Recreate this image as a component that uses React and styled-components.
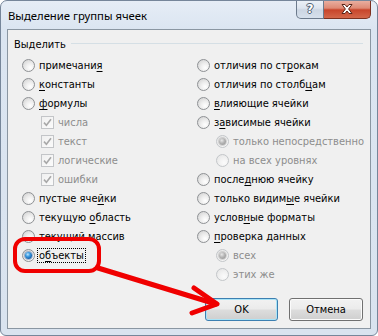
import React from 'react';
import styled, { createGlobalStyle, css } from 'styled-components';

const GlobalStyle = createGlobalStyle`
  html, body { margin: 0; padding: 0; background: #ffffff; }
  body { width: 378px; height: 336px; overflow: hidden; }
  #root { width: 378px; height: 336px; }
`;

const uiFont = `"DejaVu Sans Condensed", "DejaVu Sans", sans-serif`;

const Window = styled.div`
  position: relative;
  width: 378px;
  height: 336px;
  box-sizing: border-box;
  border: 1px solid #76869a;
  border-radius: 7px 7px 6px 6px;
  background: linear-gradient(to bottom, #e6edf6 0px, #dbe5f1 28px, #d9e3ef 100%);
  display: flex;
  flex-direction: column;
  overflow: hidden;
`;

const TitleBar = styled.div`
  height: 28px;
  flex: none;
  display: flex;
  justify-content: space-between;
  align-items: flex-start;
`;

const Title = styled.div`
  padding: 7px 0 0 7px;
  font-family: "Noto Sans", "Open Sans", sans-serif;
  font-size: 11.3px;
  line-height: 15px;
  color: #000;
`;

const Captions = styled.div`
  display: flex;
  margin-right: 6px;
  margin-top: -1px;
`;

const CaptionButton = styled.div`
  height: 19px;
  box-sizing: border-box;
  display: flex;
  align-items: center;
  justify-content: center;
  border: 1px solid #6c7a8c;
  border-top: none;
  ${(p) =>
    p.$close
      ? css`
          width: 47px;
          border-left: none;
          border-color: #7d3120;
          border-radius: 0 0 5px 0;
          background: linear-gradient(to bottom, #eab3a5 0%, #de8a75 45%, #c8452b 55%, #d3674a 100%);
        `
      : css`
          width: 28px;
          border-radius: 0 0 0 5px;
          background: linear-gradient(to bottom, #edf2f8 0%, #dde5ef 45%, #ccd6e3 55%, #d6e0ec 100%);
        `}
`;

const HelpGlyph = styled.span`
  font-family: "DejaVu Sans", sans-serif;
  font-weight: bold;
  font-size: 12px;
  line-height: 12px;
  color: #ffffff;
  text-shadow: 0 0 1px #3d4a5a, 1px 0 0 #56667a, -1px 0 0 #56667a, 0 1px 0 #56667a, 0 -1px 0 #56667a;
`;

const Client = styled.div`
  flex: 1;
  margin: 0 6px 6px 6px;
  border: 1px solid #8a96a2;
  background: #f0f0f0;
  display: flex;
  flex-direction: column;
  padding: 0 7px 7px 6px;
  font-family: ${uiFont};
  font-size: 11px;
  color: #000;
`;

const GroupHeader = styled.div`
  margin-top: 6px;
  height: 16px;
  display: flex;
  align-items: center;
  gap: 5px;
  &::after {
    content: '';
    flex: 1;
    height: 1px;
    background: #d5dfe5;
    margin-top: -1px;
  }
`;

const Columns = styled.div`
  margin-top: 4px;
  margin-left: 8px;
  display: grid;
  grid-template-columns: 175px 1fr;
`;

const Column = styled.div`
  display: flex;
  flex-direction: column;
`;

const Row = styled.div`
  height: 19px;
  display: flex;
  align-items: center;
  gap: 4px;
  padding-left: ${(p) => (p.$sub ? 19 : 0)}px;
  color: ${(p) => (p.$disabled ? '#8d8d8d' : '#000')};
  white-space: nowrap;
`;

const Label = styled.span`
  line-height: 13px;
  ${(p) =>
    p.$focus &&
    css`
      outline: 1px dotted #000;
      outline-offset: 0px;
      padding: 0 1px;
      margin-left: -1px;
    `}
  u { text-decoration: underline; text-underline-offset: 2px; }
`;

const Radio = styled.span`
  position: relative;
  flex: none;
  width: 13px;
  height: 13px;
  box-sizing: border-box;
  border-radius: 50%;
  border: 1px solid ${(p) => (p.$disabled ? '#c3c6c9' : '#8e9194')};
  background: ${(p) =>
    p.$disabled
      ? 'radial-gradient(circle at 65% 70%, #fbfbfb 0%, #f1f1f1 45%, #e2e2e2 100%)'
      : 'radial-gradient(circle at 65% 70%, #ffffff 0%, #eeeeee 40%, #cdcdcd 100%)'};
  ${(p) =>
    p.$checked &&
    css`
      &::after {
        content: '';
        position: absolute;
        left: 2px;
        top: 2px;
        width: 7px;
        height: 7px;
        border-radius: 50%;
        background: ${p.$disabled
          ? 'radial-gradient(circle at 40% 35%, #e8e8e8 0%, #b4b4b4 45%, #8e8e8e 100%)'
          : 'radial-gradient(circle at 40% 35%, #bfe6ff 0%, #3c9be0 35%, #145ca7 75%, #0c3f7a 100%)'};
        box-shadow: 0 0 0 1px ${p.$disabled ? 'rgba(150,150,150,0.35)' : 'rgba(20,70,140,0.35)'};
      }
    `}
`;

const Check = styled.span`
  flex: none;
  width: 13px;
  height: 13px;
  box-sizing: border-box;
  border: 1px solid #c3c5c8;
  background: linear-gradient(135deg, #f0f0f0 0%, #fbfbfb 100%);
  display: flex;
  align-items: center;
  justify-content: center;
  svg { display: block; }
`;

const Footer = styled.div`
  margin-top: auto;
  display: flex;
  justify-content: flex-end;
  gap: 11px;
`;

const Button = styled.button`
  height: 23px;
  width: ${(p) => p.$w}px;
  box-sizing: border-box;
  padding: 0;
  border-radius: 3px;
  font-family: ${uiFont};
  font-size: 11px;
  color: #000;
  border: 1px solid ${(p) => (p.$default ? '#3c7fb1' : '#707070')};
  background: linear-gradient(to bottom, #f2f2f2 0%, #ebebeb 49%, #dddddd 51%, #cfcfcf 100%);
  box-shadow: inset 0 0 0 1px ${(p) => (p.$default ? '#a9e4f7' : '#fbfbfb')};
`;

const Overlay = styled.svg`
  position: absolute;
  left: -1px;
  top: -1px;
  pointer-events: none;
`;

const leftItems = [
  { label: <>примечани<u>я</u></> },
  { label: <><u>к</u>онстанты</> },
  { label: <><u>ф</u>ормулы</> },
  { label: 'числа', check: true },
  { label: 'текст', check: true },
  { label: 'логические', check: true },
  { label: 'ошибки', check: true },
  { label: <>пустые яче<u>й</u>ки</> },
  { label: <>текущую <u>о</u>бласть</> },
  { label: <>текущий массив</> },
  { label: <>о<u>б</u>ъекты</>, checked: true, focus: true },
];

const rightItems = [
  { label: <>отличия по ст<u>р</u>окам</> },
  { label: <>отличия по столб<u>ц</u>ам</> },
  { label: <><u>в</u>лияющие ячейки</> },
  { label: <>з<u>а</u>висимые ячейки</> },
  { label: 'только непосредственно', sub: true, checked: true },
  { label: 'на всех уровнях', sub: true },
  { label: <>после<u>д</u>нюю ячейку</> },
  { label: <>только видим<u>ы</u>е ячейки</> },
  { label: <>услов<u>н</u>ые форматы</> },
  { label: <><u>п</u>роверка данных</> },
  { label: 'всех', sub: true, checked: true },
  { label: 'этих же', sub: true },
];

function CheckMark() {
  return (
    <svg width="9" height="9" viewBox="0 0 9 9">
      <path d="M1 4.6 L3.4 7.2 L8 1.2" fill="none" stroke="#a8a8a8" strokeWidth="1.6" />
    </svg>
  );
}

function Item({ item }) {
  const disabled = !!(item.sub || item.check);
  return (
    <Row $sub={disabled} $disabled={disabled}>
      {item.check ? (
        <Check>
          <CheckMark />
        </Check>
      ) : (
        <Radio $checked={item.checked} $disabled={disabled} />
      )}
      <Label $focus={item.focus}>{item.label}</Label>
    </Row>
  );
}

export default function App() {
  return (
    <>
      <GlobalStyle />
      <Window>
        <TitleBar>
          <Title>Выделение группы ячеек</Title>
          <Captions>
            <CaptionButton>
              <HelpGlyph>?</HelpGlyph>
            </CaptionButton>
            <CaptionButton $close>
              <svg width="14" height="12" viewBox="0 0 14 12">
                <path
                  d="M2 1.5 L5 1.5 L7 4 L9 1.5 L12 1.5 L8.6 6 L12 10.5 L9 10.5 L7 8 L5 10.5 L2 10.5 L5.4 6 Z"
                  fill="#ffffff"
                  stroke="#5a2418"
                  strokeWidth="1"
                  strokeLinejoin="round"
                />
              </svg>
            </CaptionButton>
          </Captions>
        </TitleBar>
        <Client>
          <GroupHeader>Выделить</GroupHeader>
          <Columns>
            <Column>
              {leftItems.map((it, i) => (
                <Item key={i} item={it} />
              ))}
            </Column>
            <Column>
              {rightItems.map((it, i) => (
                <Item key={i} item={it} />
              ))}
            </Column>
          </Columns>
          <Footer>
            <Button $w={73} $default>OK</Button>
            <Button $w={74}>Отмена</Button>
          </Footer>
        </Client>
        <Overlay width="378" height="336" viewBox="0 0 378 336">
          <rect x="15" y="239" width="84" height="32" rx="10" ry="10" fill="none" stroke="#f00000" strokeWidth="4" />
          <path d="M98 268 L216 304" fill="none" stroke="#f00000" strokeWidth="5" strokeLinecap="round" />
          <path d="M194 288 L217 304 L192 313" fill="none" stroke="#f00000" strokeWidth="5" strokeLinecap="round" strokeLinejoin="round" />
        </Overlay>
      </Window>
    </>
  );
}
